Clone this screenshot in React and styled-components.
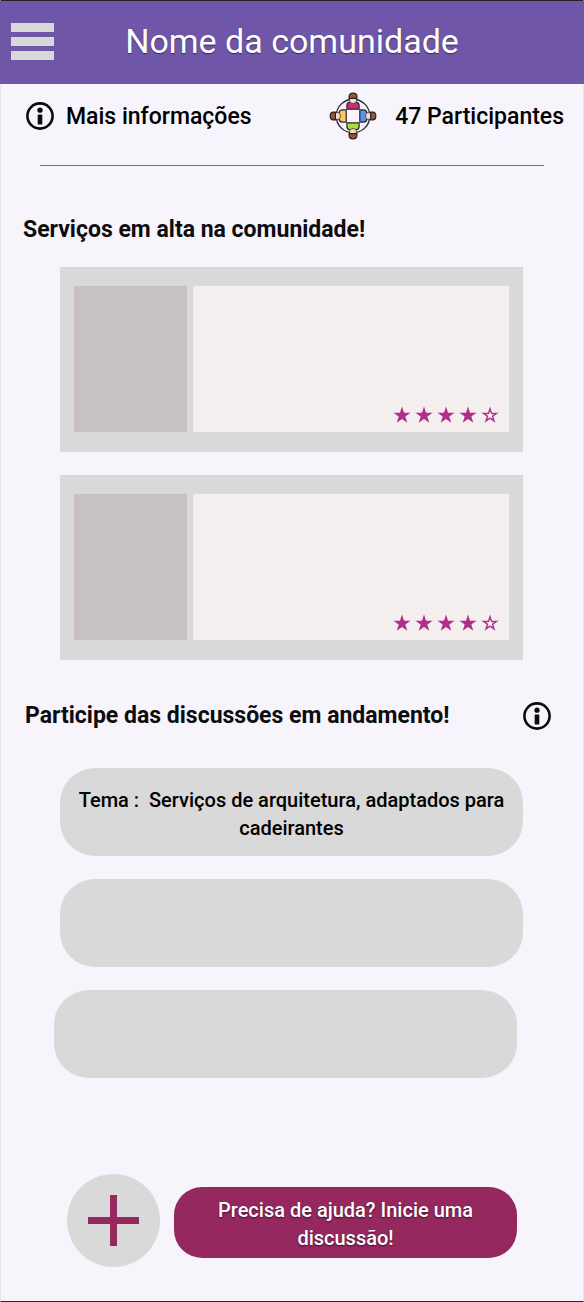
import React from "react";
import styled, { createGlobalStyle } from "styled-components";

const GlobalStyle = createGlobalStyle`
  *, *::before, *::after { box-sizing: border-box; }
  body { margin: 0; background: #f7f4fc; }
  button { font: inherit; color: inherit; border: 0; padding: 0; background: none; cursor: pointer; }
  svg { display: block; }
`;

const Screen = styled.div`
  display: flex;
  flex-direction: column;
  min-height: 100vh;
  border: 1px solid #e9e8ee;
  border-top-color: #262228;
  border-bottom-color: #262228;
  background: #f7f4fc;
  color: #000;
  font-family: Roboto, "Liberation Sans", sans-serif;
`;

const Header = styled.header`
  display: grid;
  grid-template-columns: 44px 1fr 44px;
  align-items: center;
  height: 83px;
  margin: 0 -1px;
  padding: 0 10px 2px;
  background: #6f56a9;
`;

const MenuButton = styled.button`
  display: flex;
  flex-direction: column;
  gap: 5px;
  width: 44px;
  padding-left: 1px;
`;

const MenuBar = styled.span`
  height: 9px;
  background: #d9d9d9;
`;

const Title = styled.h1`
  margin: 0;
  padding-bottom: 2px;
  color: #fff;
  font-size: 34px;
  line-height: 40px;
  font-weight: 400;
  text-align: center;
  text-shadow: 0 1px 1px rgba(0, 0, 0, 0.5);
`;

const InfoRow = styled.div`
  display: flex;
  align-items: center;
  justify-content: space-between;
  height: 65px;
  padding: 0 19px 0 24px;
`;

const InfoItem = styled.button`
  display: flex;
  align-items: center;
  gap: ${(p) => p.$gap}px;
  font-size: 23px;
  line-height: 28px;
  font-weight: 500;

  svg { margin-bottom: 2px; }
`;

const Divider = styled.hr`
  width: auto;
  height: 1px;
  margin: 16px 39px 0;
  border: 0;
  background: #6f62b0;
`;

const SectionHead = styled.div`
  display: flex;
  align-items: center;
  justify-content: space-between;
  height: 30px;
  margin: ${(p) => p.$top}px 31px 0 ${(p) => p.$left}px;
`;

const SectionTitle = styled.h2`
  margin: 0;
  color: #0d0d0f;
  font-size: 23px;
  line-height: 30px;
  font-weight: 700;
`;

const Stack = styled.div`
  display: flex;
  flex-direction: column;
  gap: 23px;
  margin: ${(p) => p.$top}px 60px 0 59px;
`;

const Card = styled.article`
  display: flex;
  gap: 6px;
  height: 185px;
  padding: 19px 14px 20px;
  background: #d9d9d9;
`;

const Thumb = styled.div`
  flex: 0 0 113px;
  background: #c7c2c1;
`;

const CardBody = styled.div`
  display: flex;
  flex: 1;
  align-items: flex-end;
  justify-content: flex-end;
  padding: 8px 10px;
  background: #f4eeee;
`;

const Stars = styled.div`
  display: flex;
  gap: 4px;
`;

const Topic = styled.button`
  height: 88px;
  padding: 4px 16px 0;
  border-radius: 35px;
  background: #d9d9d9;
  font-size: 20px;
  line-height: 28px;
  font-weight: 500;
  white-space: pre-wrap;
`;

const LastTopic = styled(Topic)`
  margin: 0 6px 0 -6px;
`;

const Footer = styled.footer`
  display: flex;
  align-items: center;
  gap: 14px;
  margin: auto 66px 34px;
`;

const AddButton = styled.button`
  display: grid;
  place-items: center;
  flex: 0 0 93px;
  height: 93px;
  border-radius: 50%;
  background: #d9d9d9;
`;

const HelpButton = styled.button`
  flex: 1;
  height: 71px;
  margin-top: 4px;
  padding: 3px 32px 0;
  border-radius: 28px;
  background: #962860;
  color: #fff;
  font-size: 20px;
  line-height: 28px;
  font-weight: 500;
  text-shadow: 0 1px 2px rgba(0, 0, 0, 0.6);
`;

function InfoIcon() {
  return (
    <svg width="30" height="30" viewBox="0 0 30 30" aria-hidden="true">
      <circle cx="15" cy="15" r="12.6" fill="none" stroke="#0b0b0b" strokeWidth="2.6" />
      <circle cx="15" cy="9.2" r="2.6" fill="#0b0b0b" />
      <rect x="12.7" y="13.6" width="4.6" height="10" rx="0.8" fill="#0b0b0b" />
    </svg>
  );
}

const PEOPLE = [
  { angle: 0, shirt: "#cf2c6e" },
  { angle: 90, shirt: "#5b93ec" },
  { angle: 180, shirt: "#a9dc3c" },
  { angle: 270, shirt: "#f9c95f" },
];

function PeopleIcon() {
  return (
    <svg width="48" height="48" viewBox="0 0 48 48" aria-hidden="true">
      <circle cx="24" cy="24" r="16.8" fill="none" stroke="#2b2c31" strokeWidth="1.4" />
      {PEOPLE.map(({ angle, shirt }) => (
        <g key={angle} transform={`rotate(${angle} 24 24)`} stroke="#252528" strokeWidth="1.2" strokeLinejoin="round">
          <path d="M17.900 17.200V13.500q0-3 3-3.400h6.200q3 .4 3 3.400v3.700z" fill={shirt} />
          <path d="M20.700 5h6.600v5.400q-3.300 2.200-6.600 0z" fill="#fbd9cf" strokeWidth="0.7" />
          <path d="M20.100 6.400V4.200q0-3 3.900-3t3.900 3v2.200z" fill="#95572c" />
        </g>
      ))}
    </svg>
  );
}

function Star({ filled }) {
  return (
    <svg width="18" height="18" viewBox="0 0 18 18" aria-hidden="true">
      <path
        d="M9 .6 11 6.700H17.600L12.300 10.500 14.300 16.800 9 13 3.700 16.800 5.700 10.500.4 6.700H7Z"
        fill="#b32c8d"
      />
      {!filled && <path d="M9 5 10 8.200H13.200L10.600 10.100 11.600 13.100 9 11.200 6.400 13.100 7.400 10.100 4.800 8.200H8Z" fill="#fff" />}
    </svg>
  );
}

function ServiceCard({ rating }) {
  return (
    <Card>
      <Thumb />
      <CardBody>
        <Stars role="img" aria-label={`${rating} de 5`}>
          {[1, 2, 3, 4, 5].map((n) => (
            <Star key={n} filled={n <= rating} />
          ))}
        </Stars>
      </CardBody>
    </Card>
  );
}

export default function App() {
  return (
    <>
      <GlobalStyle />
      <Screen>
        <Header>
          <MenuButton aria-label="Menu">
            <MenuBar />
            <MenuBar />
            <MenuBar />
          </MenuButton>
          <Title>Nome da comunidade</Title>
        </Header>
        <InfoRow>
          <InfoItem $gap={11}>
            <InfoIcon />
            Mais informações
          </InfoItem>
          <InfoItem $gap={18}>
            <PeopleIcon />
            47 Participantes
          </InfoItem>
        </InfoRow>
        <Divider />
        <SectionHead $top={49} $left={22}>
          <SectionTitle>Serviços em alta na comunidade!</SectionTitle>
        </SectionHead>
        <Stack $top={22}>
          <ServiceCard rating={4} />
          <ServiceCard rating={4} />
        </Stack>
        <SectionHead $top={41} $left={24}>
          <SectionTitle>Participe das discussões em andamento!</SectionTitle>
          <button aria-label="Informações sobre as discussões">
            <InfoIcon />
          </button>
        </SectionHead>
        <Stack $top={37}>
          <Topic>{"Tema :  Serviços de arquitetura, adaptados para cadeirantes"}</Topic>
          <Topic aria-label="Discussão 2" />
          <LastTopic aria-label="Discussão 3" />
        </Stack>
        <Footer>
          <AddButton aria-label="Nova discussão">
            <svg width="51" height="51" viewBox="0 0 51 51" aria-hidden="true">
              <path d="M22 0h7v22h22v7H29v22h-7V29H0v-7h22z" fill="#962860" />
            </svg>
          </AddButton>
          <HelpButton>Precisa de ajuda? Inicie uma discussão!</HelpButton>
        </Footer>
      </Screen>
    </>
  );
}
